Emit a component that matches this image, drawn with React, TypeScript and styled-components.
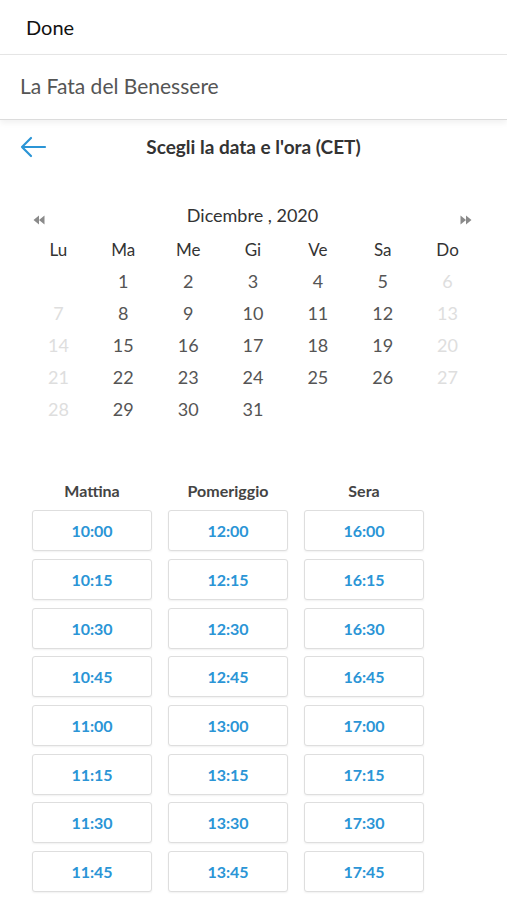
import React from "react"
import styled, { createGlobalStyle } from "styled-components"

const GlobalStyle = createGlobalStyle`
  html, body {
    margin: 0;
    padding: 0;
    background: #fff;
  }
  body {
    font-family: Lato, "Open Sans", sans-serif;
    overflow: hidden;
  }
`

const Page = styled.div`
  width: 507px;
  height: 900px;
  overflow: hidden;
  background: #fff;
`

const DoneBar = styled.div`
  height: 55px;
  display: flex;
  align-items: center;
  padding-left: 26px;
  box-sizing: border-box;
  font-size: 20px;
  color: #111;
  border-bottom: 1px solid #e6e6e6;
`

const ProviderBar = styled.div`
  height: 65px;
  box-sizing: border-box;
  display: flex;
  align-items: center;
  padding: 0 0 3px 20px;
  font-size: 21px;
  color: #555;
  border-bottom: 1px solid #dcdcdc;
  box-shadow: 0 3px 6px rgba(0, 0, 0, 0.06);
  position: relative;
`

const TitleRow = styled.div`
  height: 52px;
  display: flex;
  align-items: center;
  position: relative;
`

const BackButton = styled.button`
  position: absolute;
  left: 18px;
  top: 14px;
  border: none;
  background: none;
  padding: 0;
  width: 30px;
  height: 26px;
  display: flex;
  align-items: center;
  justify-content: center;
`

const Title = styled.div`
  flex: 1;
  text-align: center;
  font-size: 19px;
  font-weight: 700;
  color: #333;
`

const Calendar = styled.div`
  margin: 28px 0 0 26px;
  width: 454px;
`

const MonthRow = styled.div`
  height: 30px;
  display: flex;
  align-items: center;
  justify-content: space-between;
  padding: 0 8px 0 7px;
`

const MonthLabel = styled.div`
  font-size: 18px;
  color: #333;
`

const NavIcon = styled.svg`
  margin-top: 10px;
`

const DayGrid = styled.div`
  display: grid;
  grid-template-columns: repeat(7, 1fr);
  grid-auto-rows: 32px;
  margin-top: 3px;
`

const WeekDay = styled.div`
  display: flex;
  align-items: center;
  justify-content: center;
  font-size: 17px;
  color: #333;
`

const Day = styled.div<{ $off?: boolean }>`
  display: flex;
  align-items: center;
  justify-content: center;
  font-size: 18px;
  color: ${p => (p.$off ? "#dedede" : "#555")};
`

const Slots = styled.div`
  margin-top: 53px;
  padding-left: 32px;
  display: grid;
  grid-template-columns: repeat(3, 120px);
  column-gap: 16px;
`

const SlotColumn = styled.div`
  display: flex;
  flex-direction: column;
  gap: 7.7px;
`

const SlotHeader = styled.div`
  height: 24px;
  margin-bottom: 0.5px;
  display: flex;
  align-items: center;
  justify-content: center;
  font-size: 16px;
  font-weight: 700;
  color: #444;
`

const SlotButton = styled.button`
  height: 41px;
  width: 120px;
  box-sizing: border-box;
  background: #fff;
  border: 1px solid #dedede;
  border-radius: 3px;
  box-shadow: 0 1px 2px rgba(0, 0, 0, 0.06);
  font-family: Lato, "Open Sans", sans-serif;
  font-size: 16px;
  font-weight: 700;
  color: #2b95d6;
  padding: 0;
`

const weekDays = ["Lu", "Ma", "Me", "Gi", "Ve", "Sa", "Do"]

const cells: (number | null)[] = [null, ...Array.from({ length: 31 }, (_, i) => i + 1)]

const slotGroups = [
  { label: "Mattina", times: ["10:00", "10:15", "10:30", "10:45", "11:00", "11:15", "11:30", "11:45"] },
  { label: "Pomeriggio", times: ["12:00", "12:15", "12:30", "12:45", "13:00", "13:15", "13:30", "13:45"] },
  { label: "Sera", times: ["16:00", "16:15", "16:30", "16:45", "17:00", "17:15", "17:30", "17:45"] },
]

const App = () => {
  return (
    <Page>
      <GlobalStyle />
      <DoneBar>Done</DoneBar>
      <ProviderBar>La Fata del Benessere</ProviderBar>
      <TitleRow>
        <BackButton aria-label="Indietro">
          <svg width="28" height="22" viewBox="0 0 28 22" fill="none">
            <path
              d="M26 11H3M12 2L3 11l9 9"
              stroke="#2b95d6"
              strokeWidth="2.2"
              strokeLinecap="round"
              strokeLinejoin="round"
            />
          </svg>
        </BackButton>
        <Title>Scegli la data e l'ora (CET)</Title>
      </TitleRow>

      <Calendar>
        <MonthRow>
          <NavIcon width="12" height="10" viewBox="0 0 12 10">
            <path d="M6 0.5L0.5 5 6 9.5z M11.5 0.5L6 5l5.5 4.5z" fill="#8a8a8a" />
          </NavIcon>
          <MonthLabel>Dicembre , 2020</MonthLabel>
          <NavIcon width="12" height="10" viewBox="0 0 12 10">
            <path d="M0.5 0.5L6 5 0.5 9.5z M6 0.5L11.5 5 6 9.5z" fill="#8a8a8a" />
          </NavIcon>
        </MonthRow>
        <DayGrid>
          {weekDays.map(d => (
            <WeekDay key={d}>{d}</WeekDay>
          ))}
          {cells.map((n, i) => (
            <Day key={i} $off={i % 7 === 0 || i % 7 === 6}>
              {n ?? ""}
            </Day>
          ))}
        </DayGrid>
      </Calendar>

      <Slots>
        {slotGroups.map(g => (
          <SlotColumn key={g.label}>
            <SlotHeader>{g.label}</SlotHeader>
            {g.times.map(t => (
              <SlotButton key={t}>{t}</SlotButton>
            ))}
          </SlotColumn>
        ))}
      </Slots>
    </Page>
  )
}

export default App
